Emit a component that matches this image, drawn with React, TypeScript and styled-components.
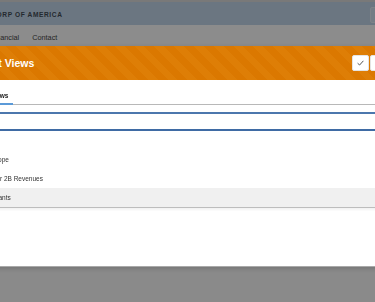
import React from "react";
import styled, { createGlobalStyle } from "styled-components";

const GlobalStyle = createGlobalStyle`
  html, body {
    margin: 0;
    padding: 0;
    height: 100%;
    overflow: hidden;
    background: #fbfbfb;
  }
  body {
    font-family: "Liberation Sans", Arial, sans-serif;
  }
`;

const Page = styled.div`
  width: 480px;
  height: 302px;
  margin-left: -40px;
  background: #fbfbfb;
`;

const TopBar = styled.header`
  height: 21px;
  border-top: 2px solid #dcdcdc;
  background: #c4d8ec;
  display: flex;
  align-items: center;
  padding: 2px 8px 0 7px;
  box-sizing: content-box;
`;

const Brand = styled.div`
  font-size: 6.6px;
  font-weight: bold;
  letter-spacing: 0.6px;
  color: #434c56;
  text-transform: uppercase;
`;

const SearchBox = styled.div`
  margin-left: auto;
  width: 60px;
  height: 14px;
  border: 1px solid #e6eef7;
  border-radius: 2px;
  background: #d6e4f3;
`;

const Nav = styled.nav`
  height: 21px;
  padding: 2px 0 0 30px;
  background: #fff;
  display: flex;
  align-items: center;
  gap: 13px;
`;

const NavLink = styled.span`
  font-size: 7.3px;
  color: #474747;
`;

const Overlay = styled.div`
  position: fixed;
  inset: 0;
  background: rgba(0, 0, 0, 0.45);
`;

const Modal = styled.div`
  position: fixed;
  top: 46px;
  left: -20px;
  width: 415px;
  height: 220px;
  background: #fff;
  display: flex;
  flex-direction: column;
  box-shadow: 0 1px 0 #a9a9a9, 0 2px 6px rgba(0, 0, 0, 0.2);
`;

const Header = styled.div`
  height: 34px;
  flex: none;
  display: flex;
  align-items: center;
  padding: 0 8px 0 2px;
  background: repeating-linear-gradient(
    45deg,
    #db7800 0 7px,
    #de7e06 7px 14px
  );
`;

const Title = styled.h2`
  margin: 0;
  font-size: 10.5px;
  font-weight: bold;
  color: #fff;
`;

const Actions = styled.div`
  margin-left: auto;
  display: flex;
  gap: 1px;
`;

const IconButton = styled.button`
  width: 17px;
  height: 16px;
  padding: 0;
  border: 1px solid #e4e4e4;
  border-radius: 2px;
  background: #fff;
  display: flex;
  align-items: center;
  justify-content: center;
`;

const Tabs = styled.div`
  display: flex;
  padding-left: 5px;
  border-bottom: 1px solid #b8b8b8;
`;

const Tab = styled.div<{ active?: boolean }>`
  padding: 12px 5px 3px;
  margin-bottom: -1px;
  font-size: 6.5px;
  line-height: 8px;
  font-weight: bold;
  color: #222;
  border-bottom: 2px solid ${p => (p.active ? "#5b9ad8" : "transparent")};
`;

const Body = styled.div`
  display: flex;
  flex-direction: column;
  padding: 7px 8px 0;
`;

const Field = styled.input`
  box-sizing: border-box;
  height: 19px;
  border: 2px solid #3f6ba4;
  border-top-color: #4c77ad;
  outline: none;
  background: #fff;
  font: inherit;
  font-size: 6.5px;
`;

const Dropdown = styled.ul`
  list-style: none;
  margin: 0 -4px;
  padding: 0;
  background: #fff;
  border-bottom: 1px solid #bdbdbd;
  box-shadow: 0 2px 2px rgba(0, 0, 0, 0.05);
`;

const Option = styled.li<{ active?: boolean }>`
  height: 19px;
  line-height: 19px;
  padding: 0 4px;
  font-size: 6.5px;
  color: #333;
  background: ${p => (p.active ? "#f0f0f0" : "transparent")};
`;

const options = ["All", "Europe", "Over 2B Revenues", "Tenants"];

export default function App() {
  return (
    <>
      <GlobalStyle />
      <Page>
        <TopBar>
          <Brand>Acme Corp of America</Brand>
          <SearchBox />
        </TopBar>
        <Nav>
          <NavLink>Financial</NavLink>
          <NavLink>Contact</NavLink>
        </Nav>
      </Page>
      <Overlay />
      <Modal>
        <Header>
          <Title>Edit Views</Title>
          <Actions>
            <IconButton aria-label="Save">
              <svg width="7" height="6" viewBox="0 0 7 6">
                <path d="M0.6 3.2 L2.6 5 L6.4 0.8" fill="none" stroke="#555" strokeWidth="1" />
              </svg>
            </IconButton>
            <IconButton aria-label="Close">
              <svg width="6" height="6" viewBox="0 0 6 6">
                <path d="M0.5 0.5 L5.5 5.5 M5.5 0.5 L0.5 5.5" stroke="#555" strokeWidth="1" />
              </svg>
            </IconButton>
          </Actions>
        </Header>
        <Tabs>
          <Tab active>Views</Tab>
        </Tabs>
        <Body>
          <Field readOnly />
          <Dropdown>
            {options.map((o, i) => (
              <Option key={o} active={i === 3}>
                {o}
              </Option>
            ))}
          </Dropdown>
        </Body>
      </Modal>
    </>
  );
}
